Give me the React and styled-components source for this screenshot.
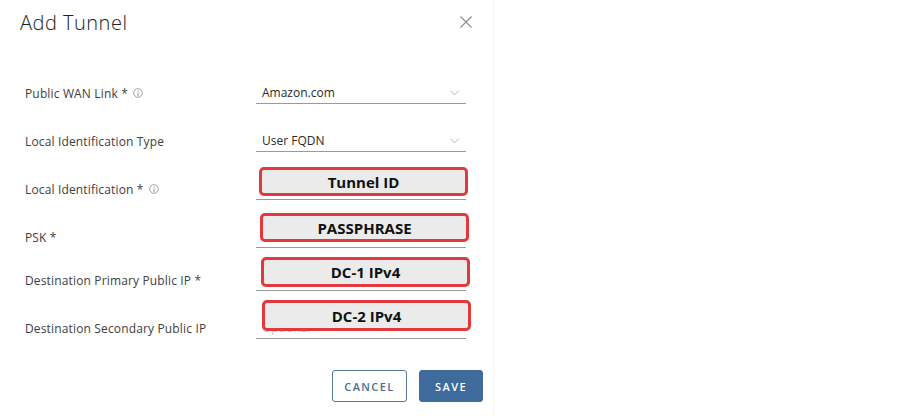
import React from "react";
import styled, { createGlobalStyle } from "styled-components";

const Global = createGlobalStyle`
  html, body { margin: 0; padding: 0; background: #ffffff; }
  body { font-family: "Open Sans", "Liberation Sans", sans-serif; }
  * { box-sizing: border-box; }
`;

const Dialog = styled.div`
  width: 494px;
  height: 416px;
  background: #ffffff;
  border-right: 1px solid #fbf7e4;
  display: flex;
  flex-direction: column;
`;

const Header = styled.div`
  display: flex;
  align-items: flex-start;
  justify-content: space-between;
  padding: 9px 20px 0 20px;
  height: 44px;
`;

const Title = styled.h1`
  margin: 0;
  font-family: "Open Sans", "Liberation Sans", sans-serif;
  font-weight: 300;
  font-size: 20px;
  letter-spacing: 0.5px;
  color: #222;
`;

const Close = styled.button`
  border: 0;
  background: none;
  padding: 0;
  margin-top: 6px;
  width: 14px;
  height: 14px;
  display: flex;
  align-items: center;
  justify-content: center;
  cursor: pointer;
`;

const Form = styled.div`
  display: flex;
  flex-direction: column;
  padding: 38px 0 0 25px;
`;

const Row = styled.div`
  display: grid;
  grid-template-columns: 231px 210px;
  align-items: center;
  margin-top: ${(p) => p.$gap}px;
`;

const Label = styled.label`
  font-family: "Open Sans", "Liberation Sans", sans-serif;
  font-size: 12px;
  font-weight: 500;
  letter-spacing: 0.15px;
  color: #404040;
  display: flex;
  align-items: center;
  gap: 5px;
`;

const Info = styled.span`
  display: inline-flex;
  width: 10px;
  height: 10px;
  color: #8a8a8a;
`;

const Field = styled.div`
  position: relative;
  height: 22px;
  border-bottom: 1px solid #9a9a9a;
  display: flex;
  align-items: center;
  justify-content: space-between;
  padding: 0 7px 0 6px;
`;

const Value = styled.span`
  font-family: "Open Sans", "Liberation Sans", sans-serif;
  font-size: 12px;
  color: ${(p) => (p.$placeholder ? "#c4c4c4" : "#2a2a2a")};
`;

const Chevron = styled.span`
  display: inline-flex;
  width: 9px;
  height: 6px;
`;

const Callout = styled.div`
  position: absolute;
  top: ${(p) => p.$top}px;
  left: ${(p) => p.$left}px;
  width: 209px;
  height: ${(p) => p.$h}px;
  border: 3px solid #e0393e;
  border-radius: 5px;
  background: #ebebeb;
  display: flex;
  align-items: center;
  justify-content: center;
  font-family: "Open Sans", "Liberation Sans", sans-serif;
  font-weight: 700;
  font-size: 15px;
  color: #111;
`;

const Footer = styled.div`
  display: flex;
  justify-content: flex-end;
  gap: 12px;
  padding: 0 10px 0 0;
  margin-top: 31px;
`;

const Button = styled.button`
  height: 32px;
  width: ${(p) => p.$w}px;
  border-radius: 3px;
  border: 1px solid ${(p) => (p.$primary ? "#3f6a9c" : "#5577a0")};
  background: ${(p) => (p.$primary ? "#3f6a9c" : "#ffffff")};
  color: ${(p) => (p.$primary ? "#ffffff" : "#4d6d94")};
  font-family: "Open Sans", "Liberation Sans", sans-serif;
  font-size: 11px;
  font-weight: 600;
  letter-spacing: 1.4px;
  padding: 0;
`;

const InfoIcon = () => (
  <Info>
    <svg viewBox="0 0 10 10" width="10" height="10">
      <circle cx="5" cy="5" r="4.3" fill="none" stroke="currentColor" strokeWidth="0.8" />
      <circle cx="5" cy="3" r="0.6" fill="currentColor" />
      <path d="M5 4.3 V7.3 M4.2 7.3 H5.8" stroke="currentColor" strokeWidth="0.8" fill="none" />
    </svg>
  </Info>
);

const Down = () => (
  <Chevron>
    <svg viewBox="0 0 9 6" width="9" height="6">
      <path d="M0.5 0.8 L4.5 4.8 L8.5 0.8" fill="none" stroke="#a8a8a8" strokeWidth="0.9" />
    </svg>
  </Chevron>
);

const rows = [
  { label: "Public WAN Link *", info: true, value: "Amazon.com", select: true, gap: 0 },
  { label: "Local Identification Type", value: "User FQDN", select: true, gap: 26 },
  { label: "Local Identification *", info: true, callout: { text: "Tunnel ID", top: -11, left: 3, h: 29 }, gap: 26 },
  { label: "PSK *", callout: { text: "PASSPHRASE", top: -13, left: 4, h: 29 }, gap: 26 },
  { label: "Destination Primary Public IP *", callout: { text: "DC-1 IPv4", top: -12, left: 5, h: 30 }, gap: 21 },
  { label: "Destination Secondary Public IP", placeholder: "Optional", callout: { text: "DC-2 IPv4", top: -17, left: 6, h: 31 }, gap: 26 },
];

export default function App() {
  return (
    <>
      <Global />
      <Dialog>
        <Header>
          <Title>Add Tunnel</Title>
          <Close aria-label="Close">
            <svg viewBox="0 0 12 12" width="12" height="12">
              <path d="M0.5 0.5 L11.5 11.5 M11.5 0.5 L0.5 11.5" stroke="#8c8c8c" strokeWidth="1.1" />
            </svg>
          </Close>
        </Header>
        <Form>
          {rows.map((r) => (
            <Row key={r.label} $gap={r.gap}>
              <Label>
                {r.label}
                {r.info && <InfoIcon />}
              </Label>
              <Field>
                {r.value && <Value>{r.value}</Value>}
                {r.placeholder && <Value $placeholder>{r.placeholder}</Value>}
                {r.select && <Down />}
                {r.callout && (
                  <Callout $top={r.callout.top} $left={r.callout.left} $h={r.callout.h}>
                    {r.callout.text}
                  </Callout>
                )}
              </Field>
            </Row>
          ))}
        </Form>
        <Footer>
          <Button $w={75}>CANCEL</Button>
          <Button $w={64} $primary>SAVE</Button>
        </Footer>
      </Dialog>
    </>
  );
}
